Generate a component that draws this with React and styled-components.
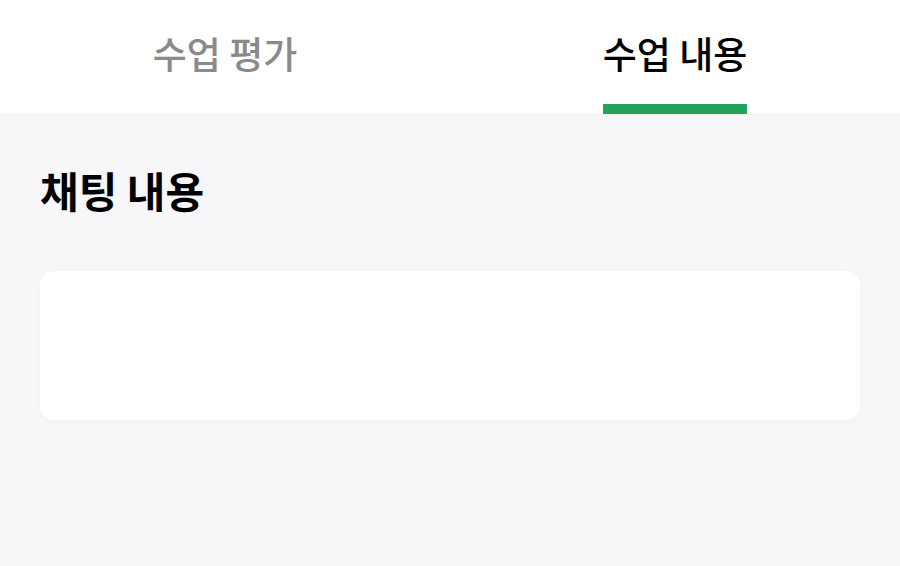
import React, { useState } from "react";
import styled, { createGlobalStyle } from "styled-components";

const GlobalStyle = createGlobalStyle`
  html, body {
    margin: 0;
    padding: 0;
    background: #f7f7f9;
    font-family: "Noto Sans CJK KR", "Noto Sans", sans-serif;
  }
  #root {
    min-height: 100vh;
  }
`;

const tabs = ["수업 평가", "수업 내용"];

const App = () => {
  const [active, setActive] = useState(1);

  return (
    <Page>
      <GlobalStyle />
      <TabBar>
        {tabs.map((t, i) => (
          <Tab key={t} onClick={() => setActive(i)}>
            <TabLabel $active={i === active}>
              {t}
              <TabLine $active={i === active} />
            </TabLabel>
          </Tab>
        ))}
      </TabBar>
      <Content>
        <Title>채팅 내용</Title>
        <ChatCard />
      </Content>
    </Page>
  );
};
export default App;

const Page = styled.div`
  min-height: 100vh;
  background: #f7f7f9;
`;
const TabBar = styled.div`
  display: flex;
  height: 114px;
  background: #fff;
  border-bottom: 1px solid #efeff1;
`;
const Tab = styled.div`
  flex: 1;
  display: flex;
  justify-content: center;
  cursor: pointer;
`;
const TabLabel = styled.div`
  display: flex;
  flex-direction: column;
  align-items: stretch;
  padding-top: 28px;
  font-size: 37px;
  line-height: 50px;
  font-weight: 500;
  color: ${(p) => (p.$active ? "#000" : "#8a8a8a")};
`;
const TabLine = styled.div`
  height: 10px;
  margin-top: 26px;
  background: ${(p) => (p.$active ? "#21a35a" : "transparent")};
`;
const Content = styled.div`
  padding: 0 40px;
`;
const Title = styled.h2`
  margin: 0;
  padding-top: 47px;
  font-size: 42px;
  line-height: 56px;
  font-weight: 700;
  color: #000;
`;
const ChatCard = styled.div`
  margin-top: 53px;
  height: 149px;
  background: #fff;
  border-radius: 14px;
  box-shadow: 0 2px 10px rgba(0, 0, 0, 0.025);
`;
